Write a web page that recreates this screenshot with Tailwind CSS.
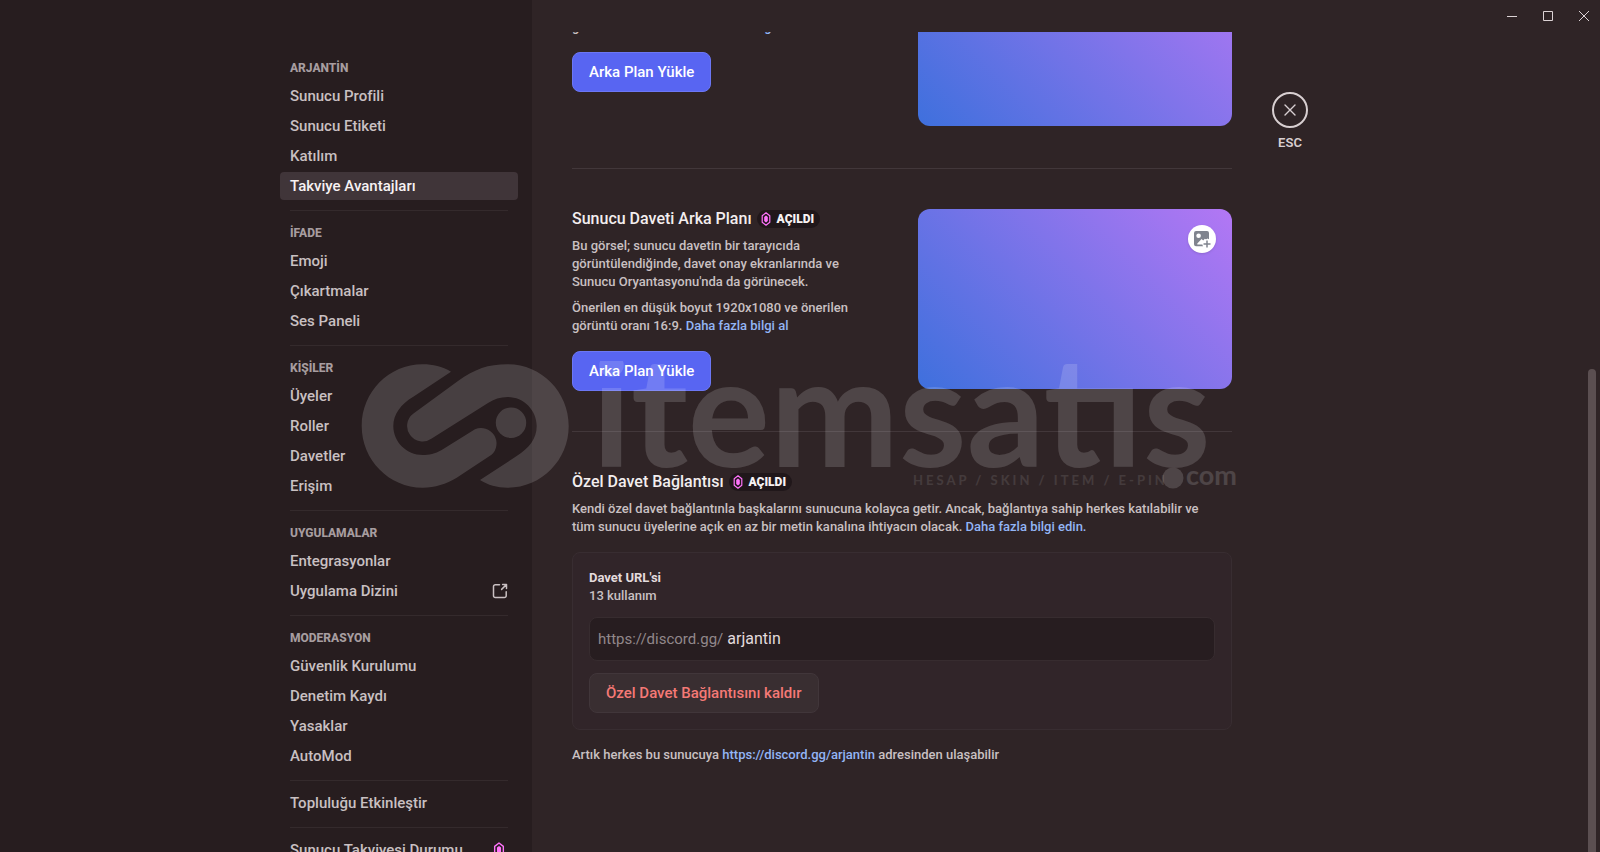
<!DOCTYPE html>
<html lang="tr">
<head>
  <meta charset="UTF-8" />
  <meta name="viewport" content="width=device-width, initial-scale=1.0" />
  <title>Takviye Avantajları</title>
  <script src="https://cdn.jsdelivr.net/npm/@tailwindcss/browser@4"></script>
</head>
<body class="relative h-screen overflow-hidden bg-[#2f2426] font-['Roboto','Noto_Sans',sans-serif] font-medium text-[#c9c0c2]">

  <!-- Icons -->
  <svg class="hidden">
    <symbol id="boost" viewBox="0 0 10 14">
      <path d="M5 0.8 8.8 3.8V10.2L5 13.2 1.2 10.2V3.8Z" fill="none" stroke="#ff73fa" stroke-width="1.2" stroke-linejoin="round" />
      <path d="M5 3.4 6.8 4.9V9.1L5 10.6 3.2 9.1V4.9Z" fill="#ff73fa" />
    </symbol>
  </svg>

  <div class="flex h-full">

    <!-- Sidebar -->
    <div class="flex flex-[1_0_260px] justify-end overflow-hidden bg-[#271d1f] pr-[14px]">
      <nav class="w-[238px] pt-[46px] text-[15px] leading-5">
        <h2 class="px-[10px] pt-[14px] pb-[6px] text-xs leading-4 font-extrabold text-[#a79da0]">ARJANTİN</h2>
        <div class="flex flex-col gap-[2px]">
          <a href="#" class="rounded px-[10px] py-1">Sunucu Profili</a>
          <a href="#" class="rounded px-[10px] py-1">Sunucu Etiketi</a>
          <a href="#" class="rounded px-[10px] py-1">Katılım</a>
          <a href="#" class="rounded bg-[#403539] px-[10px] py-1 text-[#f7f2f3]">Takviye Avantajları</a>
        </div>
        <hr class="mx-[10px] mt-[10px] border-[#342a2c]" />

        <h2 class="px-[10px] pt-[14px] pb-[6px] text-xs leading-4 font-extrabold text-[#a79da0]">İFADE</h2>
        <div class="flex flex-col gap-[2px]">
          <a href="#" class="rounded px-[10px] py-1">Emoji</a>
          <a href="#" class="rounded px-[10px] py-1">Çıkartmalar</a>
          <a href="#" class="rounded px-[10px] py-1">Ses Paneli</a>
        </div>
        <hr class="mx-[10px] mt-[10px] border-[#342a2c]" />

        <h2 class="px-[10px] pt-[14px] pb-[6px] text-xs leading-4 font-extrabold text-[#a79da0]">KİŞİLER</h2>
        <div class="flex flex-col gap-[2px]">
          <a href="#" class="rounded px-[10px] py-1">Üyeler</a>
          <a href="#" class="rounded px-[10px] py-1">Roller</a>
          <a href="#" class="rounded px-[10px] py-1">Davetler</a>
          <a href="#" class="rounded px-[10px] py-1">Erişim</a>
        </div>
        <hr class="mx-[10px] mt-[10px] border-[#342a2c]" />

        <h2 class="px-[10px] pt-[14px] pb-[6px] text-xs leading-4 font-extrabold text-[#a79da0]">UYGULAMALAR</h2>
        <div class="flex flex-col gap-[2px]">
          <a href="#" class="rounded px-[10px] py-1">Entegrasyonlar</a>
          <a href="#" class="flex items-center justify-between rounded px-[10px] py-1">
            Uygulama Dizini
            <svg class="h-4 w-4" viewBox="0 0 16 16" fill="none" stroke="currentColor" stroke-width="1.5" stroke-linecap="round" stroke-linejoin="round">
              <path d="M7.500 1.800H3.300A1.800 1.800 0 0 0 1.500 3.600V12.700A1.800 1.800 0 0 0 3.300 14.500H12.400A1.800 1.800 0 0 0 14.200 12.700V8.800" />
              <path d="M10.600 1.500H14.500V5.400M14.200 1.800 9.600 6.400" />
            </svg>
          </a>
        </div>
        <hr class="mx-[10px] mt-[10px] border-[#342a2c]" />

        <h2 class="px-[10px] pt-[14px] pb-[6px] text-xs leading-4 font-extrabold text-[#a79da0]">MODERASYON</h2>
        <div class="flex flex-col gap-[2px]">
          <a href="#" class="rounded px-[10px] py-1">Güvenlik Kurulumu</a>
          <a href="#" class="rounded px-[10px] py-1">Denetim Kaydı</a>
          <a href="#" class="rounded px-[10px] py-1">Yasaklar</a>
          <a href="#" class="rounded px-[10px] py-1">AutoMod</a>
        </div>
        <hr class="mx-[10px] mt-[10px] mb-2 border-[#342a2c]" />

        <a href="#" class="block rounded px-[10px] py-1">Topluluğu Etkinleştir</a>
        <hr class="mx-[10px] mt-[10px] mb-2 border-[#342a2c]" />

        <a href="#" class="flex items-center justify-between rounded px-[10px] py-1">
          Sunucu Takviyesi Durumu
          <svg class="mr-[3px] h-4 w-3"><use href="#boost" /></svg>
        </a>
      </nav>
    </div>

    <!-- Content -->
    <div class="flex min-w-0 flex-[1_1_796px] flex-col">

      <!-- Window controls -->
      <div class="flex h-8 shrink-0 justify-end gap-1 text-[#dcd3d5]">
        <button aria-label="Küçült" class="flex w-8 items-center justify-center">
          <svg class="h-[10px] w-[10px]" viewBox="0 0 10 10" shape-rendering="crispEdges"><path d="M0 5h10v1H0z" fill="currentColor" /></svg>
        </button>
        <button aria-label="Büyüt" class="flex w-8 items-center justify-center">
          <svg class="h-[10px] w-[10px]" viewBox="0 0 10 10" fill="none" stroke="currentColor"><path d="M0.5 0.5h9v9h-9z" /></svg>
        </button>
        <button aria-label="Pencereyi kapat" class="flex w-8 items-center justify-center">
          <svg class="h-[10px] w-[10px]" viewBox="0 0 10 10" fill="none" stroke="currentColor"><path d="M0 0 10 10M10 0 0 10" /></svg>
        </button>
      </div>

      <div class="flex min-h-0 flex-1 gap-10 overflow-hidden pl-10">
        <main class="-mt-[86px] w-full max-w-[660px] text-[13px] leading-[18px]">

          <!-- Server banner -->
          <section class="flex min-h-[182px] items-start justify-between">
            <div class="w-[290px]">
              <h3 class="text-base leading-5 text-[#f3eeef]">Sunucu Afişi Arka Planı</h3>
              <p class="mt-2">Bu görsel kanal listenin üstünde gösterilir.</p>
              <p class="mt-2">Önerilen en düşük boyut 960x540 ve önerilen görüntü oranı 16:9. <a href="#" class="text-[#93b5f5]">Daha fazla bilgi al</a></p>
              <button class="mt-4 h-10 rounded-lg border border-[#6c77f4] bg-[#5865f2] px-4 text-[15px] text-white">Arka Plan Yükle</button>
            </div>
            <div class="h-[180px] w-[314px] rounded-xl bg-linear-[45deg] from-[#3e70dd] to-[#b377f4]"></div>
          </section>

          <!-- Invite background -->
          <section class="mt-10 flex items-start justify-between border-t border-[#42373a] pt-10">
            <div class="w-[290px]">
              <div class="flex items-center gap-[5px]">
                <h3 class="text-base leading-5 text-[#f3eeef]">Sunucu Daveti Arka Planı</h3>
                <span class="flex h-[18px] items-center gap-[6px] rounded-full bg-[#20171a] pr-[6px] pl-1 text-xs font-black text-[#f7f2f3]"><svg class="h-[14px] w-[10px]"><use href="#boost" /></svg>AÇILDI</span>
              </div>
              <p class="mt-2">Bu görsel; sunucu davetin bir tarayıcıda görüntülendiğinde, davet onay ekranlarında ve Sunucu Oryantasyonu'nda da görünecek.</p>
              <p class="mt-2">Önerilen en düşük boyut 1920x1080 ve önerilen görüntü oranı 16:9. <a href="#" class="text-[#93b5f5]">Daha fazla bilgi al</a></p>
              <button class="mt-4 h-10 rounded-lg border border-[#6c77f4] bg-[#5865f2] px-4 text-[15px] text-white">Arka Plan Yükle</button>
            </div>
            <div class="flex h-[180px] w-[314px] items-start justify-end rounded-xl bg-linear-[45deg] from-[#3e70dd] to-[#b377f4] p-4">
              <button aria-label="Görsel ekle" class="flex h-7 w-7 items-center justify-center rounded-full bg-white shadow">
                <svg class="h-[18px] w-[18px]" viewBox="0 0 18 18">
                  <path d="M3 1h11a2 2 0 0 1 2 2v6.2l-1.6-.8-1.2 1-1.4-.7-1.6 1.7-1.6-1.4-4.3 4.4V14.5h6v1.7H3a2 2 0 0 1-2-2V3a2 2 0 0 1 2-2z" fill="#80848e" />
                  <circle cx="5.600" cy="5.800" r="2.300" fill="#fff" />
                  <circle cx="14" cy="14" r="4.600" fill="#fff" />
                  <path d="M14 10.500v7M10.500 14h7" stroke="#80848e" stroke-width="1.500" />
                </svg>
              </button>
            </div>
          </section>

          <!-- Vanity URL -->
          <section class="mt-10 border-t border-[#42373a] pt-10">
            <div class="flex items-center gap-[5px]">
              <h3 class="text-base leading-5 text-[#f3eeef]">Özel Davet Bağlantısı</h3>
              <span class="flex h-[18px] items-center gap-[6px] rounded-full bg-[#20171a] pr-[6px] pl-1 text-xs font-black text-[#f7f2f3]"><svg class="h-[14px] w-[10px]"><use href="#boost" /></svg>AÇILDI</span>
            </div>
            <p class="mt-2 pr-3">Kendi özel davet bağlantınla başkalarını sunucuna kolayca getir. Ancak, bağlantıya sahip herkes katılabilir ve tüm sunucu üyelerine açık en az bir metin kanalına ihtiyacın olacak. <a href="#" class="text-[#93b5f5]">Daha fazla bilgi edin.</a></p>

            <div class="mt-4 rounded-lg border border-[#382d31] bg-[#312529] p-4">
              <label for="vanity" class="block font-bold text-[#e3dbdd]">Davet URL'si</label>
              <p>13 kullanım</p>
              <div class="mt-3 flex h-11 items-center gap-1 rounded-lg border border-[#372c2f] bg-[#271d20] px-2 text-base">
                <span class="text-[15px] font-normal text-[#92888b]">https://discord.gg/</span>
                <input id="vanity" type="text" value="arjantin" class="min-w-0 flex-1 bg-transparent font-normal text-[#e3dbdd] outline-none" />
              </div>
              <button class="mt-3 h-10 rounded-lg border border-[#41363a] bg-[#392e31] px-4 text-[15px] text-[#f57976]">Özel Davet Bağlantısını kaldır</button>
            </div>

            <p class="mt-4">Artık herkes bu sunucuya <a href="#" class="text-[#93b5f5]">https://discord.gg/arjantin</a> adresinden ulaşabilir</p>
          </section>
        </main>

        <div class="flex shrink-0 flex-col items-center gap-[6px] pt-[60px]">
          <button aria-label="Kapat" class="flex h-9 w-9 items-center justify-center rounded-full border-2 border-[#d8cfd1]">
            <svg class="h-3 w-3" viewBox="0 0 12 12" fill="none" stroke="#d8cfd1" stroke-width="1.4" stroke-linecap="round"><path d="M1 1 11 11M11 1 1 11" /></svg>
          </button>
          <span class="text-[13px] leading-[18px] font-semibold text-[#d8cfd1]">ESC</span>
        </div>
      </div>
    </div>
  </div>

  <!-- Scrollbar -->
  <div class="absolute right-1 bottom-0 h-[483px] w-2 rounded-t-full bg-[#5b4f51]"></div>

  <!-- Watermark -->
  <svg class="pointer-events-none absolute top-1/2 left-1/2 h-[130px] w-[880px] -translate-x-1/2 -translate-y-1/2" viewBox="0 0 880 130" fill="#fff">
    <g opacity="0.15">
      <path d="M91 10.7C82 5.5 73 3.3 62.7 3.3C29 3.3 1.7 31 1.7 65C1.7 99 29 126.7 62.7 126.7C75 126.7 86 123 96.7 116.7L131.5 93.8A15.4 15.4 0 0 0 115 68.3L81.7 89C75 93 69 94 62.7 94C46.500 94 33.300 81 33.300 65C33.300 53 41 43 53.300 35.700Z" />
      <path d="M53.500 52.500L98 20C115 8 128 3.300 147.700 3.300C181.500 3.300 208.700 31 208.700 65C208.700 99 181.500 126.700 147.700 126.700C137 126.700 128 124 120 119L156.700 95C169 87 176.700 78 176.700 65C176.700 49 163.500 36 147.700 36C140 36 134 38 128 42L71.700 77.500A15.400 15.400 0 0 1 53.500 52.500Z" />
      <circle cx="151" cy="61.700" r="15.200" />
      <text x="232" y="106" font-size="154" font-weight="700" font-family="Lato, sans-serif">itemsatıs</text>
      <circle cx="813" cy="117" r="10.500" />
      <text x="826" y="124" font-size="27" font-weight="700" font-family="Lato, sans-serif">com</text>
    </g>
    <text x="553" y="124" font-size="13" font-weight="700" font-family="Lato, sans-serif" letter-spacing="3" opacity="0.100">HESAP / SKIN / ITEM / E-PIN</text>
  </svg>

</body>
</html>
